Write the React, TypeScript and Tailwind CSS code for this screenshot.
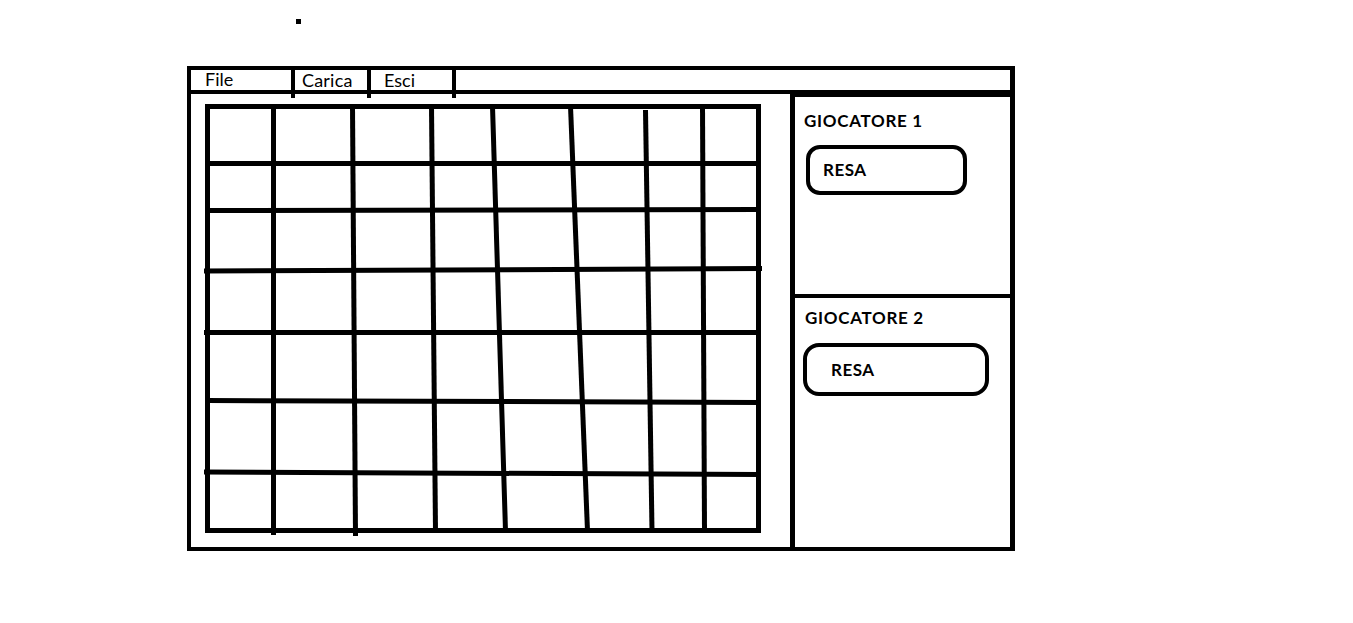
import React from "react";

const verticals: [number, number, number, number][] = [
  [273.5, 106, 273.5, 535],
  [352.5, 106, 355.5, 536],
  [431.5, 106, 435.5, 532],
  [492.5, 106, 505.5, 531],
  [570.5, 106, 587.5, 531],
  [645.5, 110, 652, 531],
  [702.5, 106, 704.5, 531],
];

const horizontals: [number, number, number, number][] = [
  [207, 163.5, 756, 163.5],
  [207, 210.5, 759, 209.5],
  [204, 271, 762, 268.5],
  [204, 332.5, 759, 332.5],
  [207, 400.5, 759, 402.5],
  [204, 472, 759, 474.5],
];

function Board() {
  return (
    <svg
      width={560}
      height={436}
      viewBox="205 104 560 436"
      className="block overflow-visible"
    >
      <g stroke="#000" strokeWidth={5} fill="none">
        <line x1={207.5} y1={104} x2={207.5} y2={533} />
        <line x1={205} y1={106.5} x2={761} y2={106.5} />
        <line x1={758.5} y1={104} x2={758.5} y2={533} />
        <line x1={205} y1={530.5} x2={761} y2={530.5} />
        {verticals.map(([x1, y1, x2, y2], i) => (
          <line key={"v" + i} x1={x1} y1={y1} x2={x2} y2={y2} />
        ))}
        {horizontals.map(([x1, y1, x2, y2], i) => (
          <line key={"h" + i} x1={x1} y1={y1} x2={x2} y2={y2} />
        ))}
      </g>
    </svg>
  );
}

function Sep() {
  return <div className="w-[4px] h-[32px] -mt-[4px] bg-black shrink-0" />;
}

export default function App() {
  return (
    <div
      className="w-[1353px] h-[623px] bg-white text-black overflow-hidden"
      style={{ fontFamily: "Lato, 'Open Sans', sans-serif" }}
    >
      <div className="pt-[19px] pl-[296px]">
        <div className="w-[5px] h-[5px] bg-black" />
      </div>
      <div className="mt-[42px] ml-[187px] w-[828px] h-[485px] border-[4px] border-r-[5px] border-black flex flex-col">
        {/* menu bar */}
        <div className="h-[24px] border-b-[4px] border-black flex items-start shrink-0">
          <div className="w-[100px] h-[20px] pl-[14px] text-[18px] leading-[18px]">File</div>
          <Sep />
          <div className="w-[72px] h-[20px] pl-[7px] text-[18px] leading-[21px] tracking-[0.2px]">Carica</div>
          <Sep />
          <div className="w-[81px] h-[20px] pl-[13px] text-[18px] leading-[21px]">Esci</div>
          <Sep />
        </div>
        {/* body */}
        <div className="flex flex-1 min-h-0">
          <div className="w-[599px] pl-[14px] pt-[10px] shrink-0">
            <Board />
          </div>
          <div className="flex-1 border-l-[5px] border-t-[3px] border-black flex flex-col">
            <div className="h-[201px] border-b-[4px] border-black pt-[14px] pl-[9px] shrink-0">
              <div className="text-[17px] leading-[20px] font-bold tracking-[0.7px]">GIOCATORE 1</div>
              <button className="mt-[14px] ml-[2px] w-[161px] h-[50px] border-[4px] border-black rounded-[14px] pl-[13px] text-left text-[17px] font-bold tracking-[0.5px]">
                RESA
              </button>
            </div>
            <div className="flex-1 pt-[10px] pl-[10px]">
              <div className="text-[17px] leading-[20px] font-bold tracking-[0.7px]">GIOCATORE 2</div>
              <button className="mt-[15px] -ml-[2px] w-[186px] h-[53px] border-[4px] border-black rounded-[16px] pl-[24px] text-left text-[17px] font-bold tracking-[0.5px]">
                RESA
              </button>
            </div>
          </div>
        </div>
      </div>
    </div>
  );
}
